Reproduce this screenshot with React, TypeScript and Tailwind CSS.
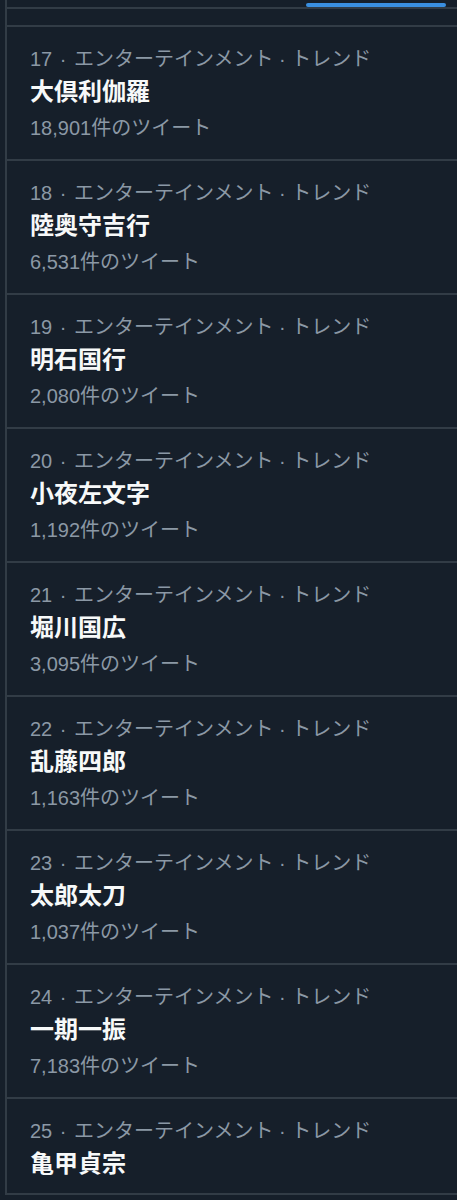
const trends = [
  { rank: 17, name: '大倶利伽羅', count: '18,901' },
  { rank: 18, name: '陸奥守吉行', count: '6,531' },
  { rank: 19, name: '明石国行', count: '2,080' },
  { rank: 20, name: '小夜左文字', count: '1,192' },
  { rank: 21, name: '堀川国広', count: '3,095' },
  { rank: 22, name: '乱藤四郎', count: '1,163' },
  { rank: 23, name: '太郎太刀', count: '1,037' },
  { rank: 24, name: '一期一振', count: '7,183' },
  { rank: 25, name: '亀甲貞宗' },
]

type Trend = { rank: number; name: string; count?: string }

function TrendItem({ trend }: { trend: Trend }) {
  return (
    <div
      className={
        'border-b-2 border-[#323c46] pl-[23px] pt-[20px] ' +
        (trend.count ? 'pb-[19px]' : 'pb-[14px]')
      }
    >
      <div className="text-[20px] leading-[24px] text-[#8b98a5]">
        {trend.rank}
        <span className="px-[2px]"> · </span>
        エンターテインメント · トレンド
      </div>
      <div className="mt-[6px] text-[24px] font-bold leading-[30px] text-[#f7f9f9]">
        {trend.name}
      </div>
      {trend.count && (
        <div className="mt-[9px] text-[20px] leading-[24px] text-[#8b98a5]">
          {trend.count}件のツイート
        </div>
      )}
    </div>
  )
}

export default function App() {
  return (
    <div
      className="min-h-screen bg-[#161f2a]"
      style={{ fontFamily: '"Liberation Sans", "Noto Sans CJK JP", sans-serif' }}
    >
      <div className="ml-[5px] border-l-2 border-[#323c46]">
        {/* tab strip: active tab indicator */}
        <div className="flex justify-end pr-[11px] pt-[3px]">
          <div className="h-[4px] w-[140px] rounded-full bg-[#3a8fe0]" />
        </div>
        <div className="h-[2px] bg-[#323c46]" />
        <div className="h-[16px]" />
        <div className="h-[2px] bg-[#323c46]" />

        {trends.map((t) => (
          <TrendItem key={t.rank} trend={t} />
        ))}
      </div>
    </div>
  )
}
